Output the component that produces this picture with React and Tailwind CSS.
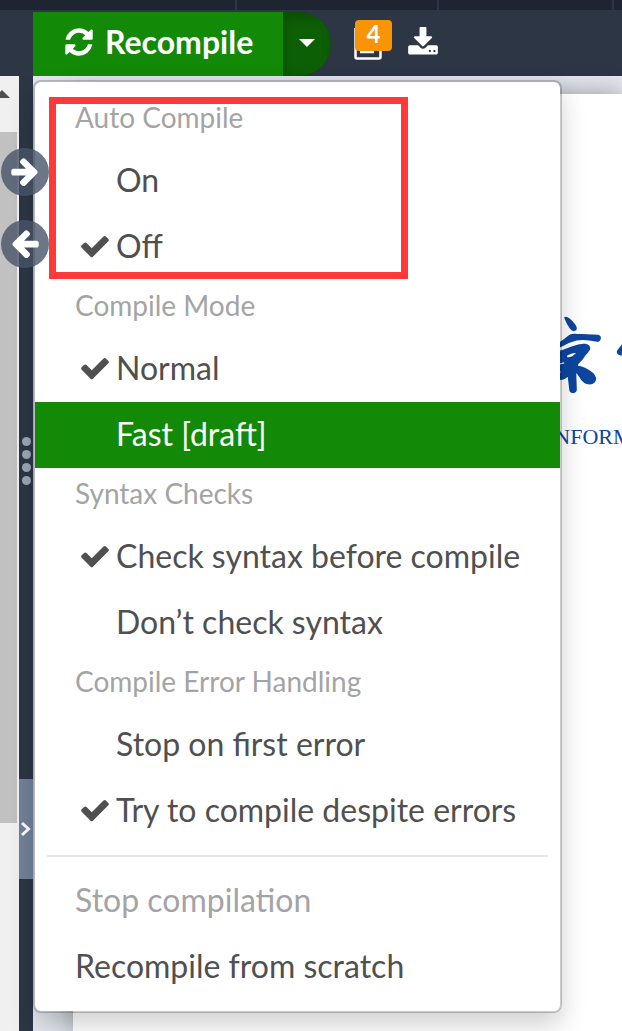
const ICONS = {
  refresh:
    'M1639 1056q0 5-1 7-64 268-268 434.5t-478 166.5q-146 0-282.500-55t-243.500-157l-129 129q-19 19-45 19t-45-19-19-45v-448q0-26 19-45t45-19h448q26 0 45 19t19 45-19 45l-137 137q71 66 161 102t187 36q134 0 250-65t186-179q11-17 53-117 8-23 30-23h192q13 0 22.500 9.500t9.500 22.500zm25-800v448q0 26-19 45t-45 19h-448q-26 0-45-19t-19-45 19-45l138-138q-148-137-349-137-134 0-250 65t-186 179q-11 17-53 117-8 23-30 23h-199q-13 0-22.500-9.500t-9.500-22.500v-7q65-268 270-434.500t480-166.500q146 0 284 55.500t245 156.500l130-129q19-19 45-19t45 19 19 45z',
  check:
    'M1671 566q0 40-28 68l-724 724-136 136q-28 28-68 28t-68-28l-136-136-362-362q-28-28-28-68t28-68l136-136q28-28 68-28t68 28l294 295 656-657q28-28 68-28t68 28l136 136q28 28 28 68z',
  arrow:
    'M1600 960q0 54-37 91l-651 651q-39 37-91 37-51 0-90-37l-75-75q-38-38-38-91t38-91l293-293h-704q-52 0-84.500-37.500t-32.500-90.500v-128q0-53 32.500-90.500t84.500-37.500h704l-293-294q-38-36-38-90t38-90l75-75q38-38 90-38 53 0 91 38l651 651q37 35 37 90z',
  download:
    'M1344 1344q0-26-19-45t-45-19-45 19-19 45 19 45 45 19 45-19 19-45zm256 0q0-26-19-45t-45-19-45 19-19 45 19 45 45 19 45-19 19-45zm128-224v320q0 40-28 68t-68 28h-1472q-40 0-68-28t-28-68v-320q0-40 28-68t68-28h465l135 136q58 56 136 56t136-56l136-136h464q40 0 68 28t28 68zm-325-569q17 41-14 70l-448 448q-18 19-45 19t-45-19l-448-448q-31-29-14-70 17-39 59-39h256v-448q0-26 19-45t45-19h256q26 0 45 19t19 45v448h256q42 0 59 39z',
};

function Icon({ name, className }) {
  return (
    <svg viewBox="0 0 1792 1792" fill="currentColor" aria-hidden="true" className={className}>
      <path d={ICONS[name]} />
    </svg>
  );
}

const SECTIONS = [
  { title: 'Auto Compile', items: [['On', false], ['Off', true]] },
  { title: 'Compile Mode', items: [['Normal', true], ['Fast [draft]', false, true]] },
  { title: 'Syntax Checks', items: [['Check syntax before compile', true], ['Don’t check syntax', false]] },
  { title: 'Compile Error Handling', items: [['Stop on first error', false], ['Try to compile despite errors', true]] },
];

function MenuItem({ label, checked, active }) {
  return (
    <button
      type="button"
      role="menuitemradio"
      aria-checked={checked}
      className={
        active
          ? 'flex h-[66px] w-full items-center bg-[#138a07] pb-[3px] pl-11 text-left text-[32px] text-white'
          : 'flex h-[66px] w-full items-center pb-[3px] pl-11 text-left text-[32px] text-[#505050]'
      }
    >
      <span className="w-[37px] shrink-0">{checked && <Icon name="check" className="size-8" />}</span>
      <span className="whitespace-nowrap">{label}</span>
    </button>
  );
}

function CompileMenu() {
  return (
    <div
      role="menu"
      aria-label="Compile options"
      className="absolute top-20 left-[33px] w-[529px] rounded-lg border-2 border-black/20 bg-white bg-clip-padding pt-[10px] pb-3 shadow-[0_12px_24px_rgba(0,0,0,0.18)]"
    >
      {SECTIONS.map(({ title, items }) => (
        <div key={title} role="group" aria-label={title}>
          <div className="h-14 pl-10 text-[28px] leading-[50px] text-[#a4a4a4]">{title}</div>
          {items.map(([label, checked, active]) => (
            <MenuItem key={label} label={label} checked={checked} active={active} />
          ))}
        </div>
      ))}
      <hr className="mx-3 mt-[11px] mb-[10px] border-t-2 border-[#e5e5e5]" />
      <button type="button" role="menuitem" disabled className="block h-[66px] w-full pl-10 text-left text-[32px] text-[#a4a4a4]">
        Stop compilation
      </button>
      <button type="button" role="menuitem" className="block h-[66px] w-full pl-10 text-left text-[32px] text-[#505050]">
        Recompile from scratch
      </button>
    </div>
  );
}

function Toolbar() {
  return (
    <header className="flex h-[66px] shrink-0 items-center bg-[#2c3645] pl-[33px] text-white">
      <div className="mt-0.5 flex h-16 overflow-hidden rounded-r-full">
        <button type="button" className="flex w-[250px] items-center bg-[#138a07] pb-[5px] pl-[30px] text-[32px] font-bold">
          <Icon name="refresh" className="mr-[10px] size-8" />
          Recompile
        </button>
        <button type="button" aria-label="Compile options" className="flex w-12 items-center justify-center bg-[#0d5f05] pb-0.5 shadow-[inset_0_6px_10px_rgba(0,0,0,0.2)]">
          <svg viewBox="0 0 16 8" aria-hidden="true" className="h-2 w-4" fill="currentColor">
            <path d="M0 0h16l-8 8z" />
          </svg>
        </button>
      </div>
      <button type="button" aria-label="Logs, 4 warnings" className="relative mb-[6px] ml-[22px] h-10 w-[39px]">
        <svg viewBox="0 0 39 40" aria-hidden="true" className="h-10 w-[39px]" fill="none" stroke="currentColor">
          <path d="M2.500 8v29q0 1.500 1.500 1.500h22q1.500 0 1.500-1.500V8" strokeWidth="2.500" />
          <path d="M7 32h14" strokeWidth="2.500" />
        </svg>
        <span className="absolute top-0 left-0.5 flex h-[31px] w-[37px] items-center justify-center rounded bg-[#f89406] pb-1 text-2xl font-bold">4</span>
      </button>
      <button type="button" aria-label="Download PDF" className="ml-[15px]">
        <Icon name="download" className="size-8" />
      </button>
    </header>
  );
}

function SyncButton({ label, flip }) {
  return (
    <button type="button" aria-label={label} className="flex size-12 items-center justify-center rounded-full bg-[#475468]/80 pb-0.5 text-white">
      <Icon name="arrow" className={flip ? 'size-8 -scale-x-100' : 'size-8'} />
    </button>
  );
}

export default function App() {
  return (
    <div className="relative flex h-screen flex-col overflow-hidden bg-[#2c3645] font-['Lato',sans-serif]">
      <div className="flex h-[10px] shrink-0 bg-[#1e2530]">
        <div className="w-[237px] border-r-2 border-[#2c3645]" />
        <div className="w-[202px] border-r-2 border-[#2c3645]" />
        <div className="w-[175px] border-r-2 border-[#2c3645]" />
      </div>
      <Toolbar />
      <div className="flex min-h-0 grow">
        <div className="w-[19px] shrink-0 bg-[#f0f0f0] pr-0.5">
          <svg viewBox="0 0 17 56" aria-hidden="true" className="h-14 w-full">
            <path d="M-6 22 2 14l8 8z" fill="#505050" />
          </svg>
          <div className="h-[691px] bg-[#c1c1c1]" />
        </div>
        <div className="flex w-[14px] shrink-0 flex-col items-center bg-[#2c3645]">
          <div className="mt-[361px] flex flex-col gap-1">
            <i className="size-[9px] rounded-full bg-[#9da7b7]" />
            <i className="size-[9px] rounded-full bg-[#9da7b7]" />
            <i className="size-[9px] rounded-full bg-[#9da7b7]" />
            <i className="size-[9px] rounded-full bg-[#9da7b7]" />
          </div>
          <button type="button" aria-label="Show panel" className="mt-[294px] flex h-[100px] w-full items-center justify-center bg-[#72819a]">
            <svg viewBox="0 0 10 16" aria-hidden="true" className="h-4 w-[10px]" fill="none" stroke="white" strokeWidth="3">
              <path d="m1 2 6.500 6L1 14" />
            </svg>
          </button>
        </div>
        <main className="min-w-0 grow bg-[#e4e7ef] pt-[18px] pl-10">
          <article className="h-full overflow-hidden bg-white pt-[206px] pl-[467px] shadow-[0_0_24px_rgba(0,0,0,0.35)]">
            <svg viewBox="0 0 246 300" aria-hidden="true" className="h-[100px] w-[82px]" fill="#0d469f" stroke="#0d469f" strokeWidth="5" strokeLinejoin="round">
              <path d="M77 53q10 2 22 16 12 13 8 20-8 5-15-4-9-13-16-30-2-3 1-2z" />
              <path d="M40 138q22-8 45-28 8-8 24-6l66 3q6 2 5 8-1 8-9 8-36-8-62-4-24 6-44 18-12 8-27 12z" />
              <path
                d="M40 158q30-4 58-17 22-9 38-7 14 3 12 13-5 9-14 18-8 14-20 24l-4 10q24 2 48 22 12 14 6 22-5 8-15 8-18 0-29-21-6-11-14-16l2 54q0 9-9 9-9-1-9-10l-5-43q-10 15-30 13-8-2-4-9 14-8 23-20-16 4-34 14v-22q20-4 36-8l-2-8q-16 6-34 6zm40 6-2 10q18 4 36-18-14-2-34 8z"
                fillRule="evenodd"
              />
              <path d="M250 132v26q-4 8-12 5-6-3-5-9 8-11 17-22z" />
            </svg>
            <p className="mt-[21px] pl-[7px] font-['Liberation_Serif',serif] text-[22px] leading-8 text-[#0d469f]">INFORM</p>
          </article>
        </main>
      </div>
      <CompileMenu />
      <div className="absolute top-[148px] left-px flex flex-col gap-6">
        <SyncButton label="Go to location in PDF" />
        <SyncButton label="Go to location in code" flip />
      </div>
      <div className="pointer-events-none absolute top-[97px] left-[49px] h-[182px] w-[359px] border-[7px] border-[#ff3838]" />
    </div>
  );
}
